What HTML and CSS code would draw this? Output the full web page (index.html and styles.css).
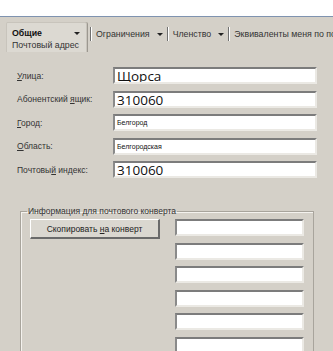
FILE: index.html
```html
<!DOCTYPE html>
<html lang="ru">
<head>
<meta charset="utf-8">
<link rel="stylesheet" href="styles.css">
</head>
<body>
<div class="top"></div>
<div class="window">
  <div class="tabs">
    <div class="tab active">
      <div class="tab-head"><b>Общие</b><span class="arrow"></span></div>
      <div class="tab-sub">Почтовый адрес</div>
    </div>
    <div class="tab"><span>Ограничения</span><span class="arrow"></span></div>
    <div class="tab"><span>Членство</span><span class="arrow"></span></div>
    <div class="tab last"><span>Эквиваленты меня по почте</span></div>
  </div>
  <div class="panel">
    <div class="form">
      <label class="lbl"><u>У</u>лица:</label>
      <div class="input big">Щорса</div>
      <label class="lbl">Абонентский <u>я</u>щик:</label>
      <div class="input big">310060</div>
      <label class="lbl"><u>Г</u>ород:</label>
      <div class="input small">Белгород</div>
      <label class="lbl"><u>О</u>бласть:</label>
      <div class="input small">Белгородская</div>
      <label class="lbl">Почтовы<u>й</u> индекс:</label>
      <div class="input big">310060</div>
    </div>
    <fieldset class="group">
      <legend>Информация для почтового конверта</legend>
      <div class="group-body">
        <div class="btn"><span>Скопировать <u>н</u>а конверт</span></div>
        <div class="lines">
          <div class="input"></div>
          <div class="input"></div>
          <div class="input"></div>
          <div class="input"></div>
          <div class="input"></div>
          <div class="input"></div>
        </div>
      </div>
    </fieldset>
  </div>
</div>
</body>
</html>
```
FILE: styles.css
```css
html, body {
  margin: 0;
  padding: 0;
  background: #fff;
  overflow: hidden;
}
body {
  width: 333px;
  height: 351px;
  font-family: "Liberation Sans", Arial, sans-serif;
  color: #222;
}
.top {
  height: 16px;
  background: #fff;
}
.window {
  border-top: 1px solid #7f93b0;
  background: #d4d0c8;
  height: 334px;
  overflow: hidden;
}
.tabs {
  display: flex;
  align-items: flex-start;
  padding: 5px 0 0 6px;
  height: 31px;
  font-size: 8.8px;
  white-space: nowrap;
  overflow: hidden;
}
.tab {
  display: flex;
  align-items: center;
  gap: 7px;
  height: 14px;
  margin-top: 5px;
  padding: 0 5px 0 4px;
  border-left: 1px solid #fff;
  box-shadow: -1px 0 0 #707070;
  color: #333;
  flex: none;
}
.tab.active {
  display: block;
  width: 81px;
  height: 30px;
  margin-top: 0;
  margin-right: 4px;
  padding: 4px 6px 0 5px;
  box-sizing: border-box;
  border: 1px solid #c8c4bc;
  border-bottom: none;
  border-radius: 2px 2px 0 0;
  background: #dcd9d2;
  box-shadow: 1px 0 0 #9c9890;
}
.tab-head {
  display: flex;
  justify-content: space-between;
  align-items: center;
  height: 12px;
  color: #111;
}
.tab-sub {
  margin-top: 1px;
  color: #333;
}
.arrow {
  width: 0;
  height: 0;
  border-left: 3px solid transparent;
  border-right: 3px solid transparent;
  border-top: 3px solid #222;
}
.panel {
  padding: 14px 0 0 17px;
}
.form {
  display: grid;
  grid-template-columns: 96px 204px;
  row-gap: 6.5px;
  align-items: center;
  font-size: 8.5px;
}
.lbl {
  color: #333;
}
.input {
  height: 17px;
  box-sizing: border-box;
  background: #fff;
  border-top: 2px solid #7c7c7c;
  border-left: 2px solid #8a8a8a;
  border-right: 2px solid #ebe9e4;
  border-bottom: 2px solid #ebe9e4;
  display: flex;
  align-items: center;
  padding-left: 2px;
  color: #111;
  overflow: hidden;
}
.input.big {
  font-family: "Open Sans", "Noto Sans", sans-serif;
  font-size: 13.5px;
  padding-top: 1px;
}
.input.small {
  font-size: 7px;
}
.group {
  margin: 28px 0 0 3px;
  width: 294px;
  box-sizing: border-box;
  padding: 0 9px;
  border: 1px solid #a8a49c;
  box-shadow: inset 1px 1px 0 #f4f2ee;
  height: 170px;
  font-size: 8.5px;
}
.group legend {
  padding: 0 1px;
  margin-left: -3px;
  color: #333;
}
.group-body {
  display: flex;
  justify-content: space-between;
  align-items: flex-start;
  padding-top: 3px;
}
.btn {
  width: 130px;
  height: 20px;
  box-sizing: border-box;
  display: flex;
  align-items: center;
  justify-content: center;
  background: #dad7d0;
  border-top: 1px solid #fff;
  border-left: 1px solid #fff;
  border-right: 2px solid #6a6a6a;
  border-bottom: 2px solid #6a6a6a;
  color: #222;
}
.lines {
  display: flex;
  flex-direction: column;
  gap: 6.5px;
  width: 129px;
}
```
